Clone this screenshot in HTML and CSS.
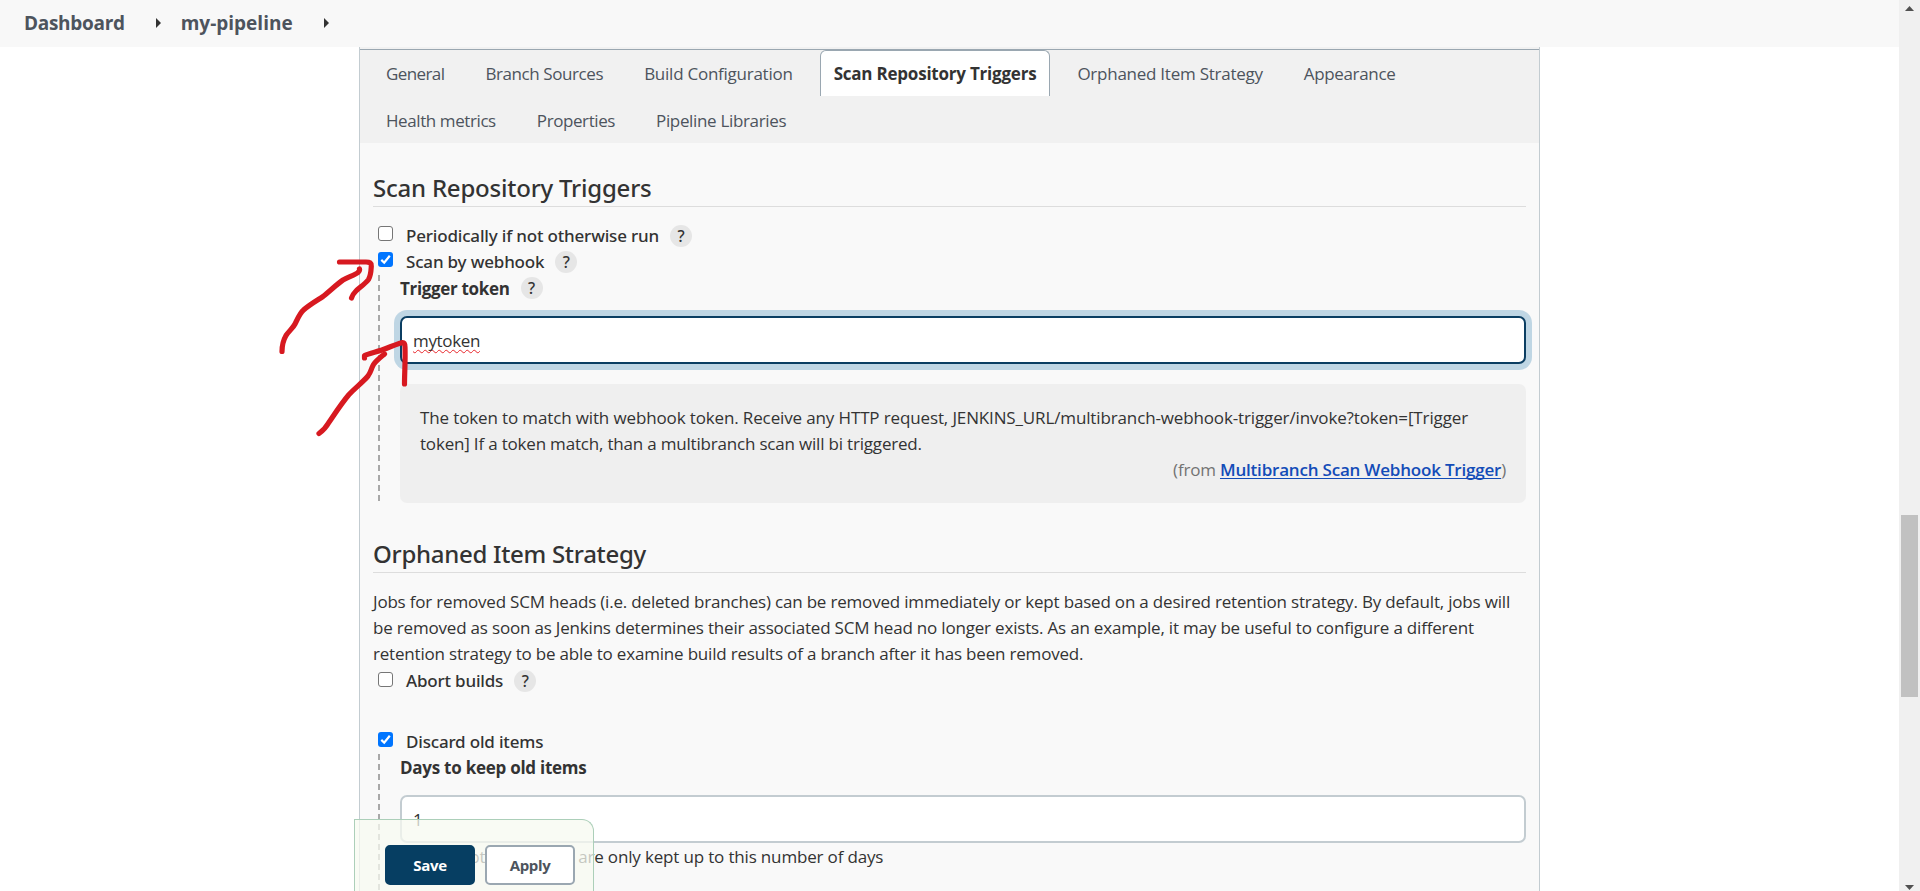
FILE: index.html
```html
<!DOCTYPE html>
<html lang="en">
<head>
<meta charset="utf-8">
<title>my-pipeline Config [Jenkins]</title>
<link rel="stylesheet" href="styles.css">
</head>
<body>
<div class="app">
  <div class="main">
    <nav class="breadcrumbs">
      <a class="crumb crumb-home">Dashboard</a>
      <svg class="crumb-arrow" width="5" height="10" viewBox="0 0 5 10"><path d="M0 0L5 5L0 10z" fill="#333"/></svg>
      <a class="crumb">my-pipeline</a>
      <svg class="crumb-arrow" width="5" height="10" viewBox="0 0 5 10"><path d="M0 0L5 5L0 10z" fill="#333"/></svg>
    </nav>

    <div class="panel">
      <div class="tabs">
        <div class="tab-row">
          <a class="tab tab-tight">General</a>
          <a class="tab tab-snug">Branch Sources</a>
          <a class="tab tab-loose">Build Configuration</a>
          <a class="tab tab-active">Scan Repository Triggers</a>
          <a class="tab tab-loose">Orphaned Item Strategy</a>
          <a class="tab">Appearance</a>
        </div>
        <div class="tab-row">
          <a class="tab tab-snug">Health metrics</a>
          <a class="tab tab-snug">Properties</a>
          <a class="tab">Pipeline Libraries</a>
        </div>
      </div>

      <form class="form">
        <h2 class="section-title">Scan Repository Triggers</h2>
        <div class="option option-first">
          <span class="checkbox"></span>
          <label class="option-label">Periodically if not otherwise run</label>
          <span class="help">?</span>
        </div>
        <div class="option">
          <span class="checkbox checked"><svg width="15" height="15" viewBox="0 0 15 15"><path d="M3.3 7.9L6.2 10.7L11.8 3.7" fill="none" stroke="#fff" stroke-width="2.2"/></svg></span>
          <label class="option-label">Scan by webhook</label>
          <span class="help">?</span>
        </div>
        <div class="nested">
          <div class="field-head">
            <label class="field-label field-label-token">Trigger token</label>
            <span class="help">?</span>
          </div>
          <div class="input input-focus"><span class="misspelled">mytoken</span></div>
          <div class="help-box">
            <p class="text line-token">The token to match with webhook token. Receive any HTTP request, JENKINS_URL/multibranch-webhook-trigger/invoke?token=[Trigger<br>
            <span class="text">token] If a token match, than a multibranch scan will bi triggered.</span></p>
            <p class="from">(from <a class="plugin-link">Multibranch Scan Webhook Trigger</a>)</p>
          </div>
        </div>

        <h2 class="section-title section-orphaned">Orphaned Item Strategy</h2>
        <p class="text intro">Jobs for removed SCM heads (i.e. deleted branches) can be removed immediately or kept based on a desired retention strategy. By default, jobs will<br>be removed as soon as Jenkins determines their associated SCM head no longer exists. As an example, it may be useful to configure a different<br>retention strategy to be able to examine build results of a branch after it has been removed.</p>
        <div class="option option-abort">
          <span class="checkbox"></span>
          <label class="option-label">Abort builds</label>
          <span class="help">?</span>
        </div>
        <div class="option option-discard">
          <span class="checkbox checked"><svg width="15" height="15" viewBox="0 0 15 15"><path d="M3.3 7.9L6.2 10.7L11.8 3.7" fill="none" stroke="#fff" stroke-width="2.2"/></svg></span>
          <label class="option-label">Discard old items</label>
        </div>
        <div class="nested nested-discard">
          <div class="field-head"><label class="field-label">Days to keep old items</label></div>
          <div class="input">1</div>
          <p class="text description">if not empty, old items are only kept up to this number of days</p>
        </div>
      </form>
    </div>
  </div>

  <div class="scrollbar">
    <svg class="scroll-up" width="9" height="5" viewBox="0 0 9 5"><path d="M4.5 0L9 5H0z" fill="#505050"/></svg>
    <div class="scroll-thumb"></div>
    <svg class="scroll-down" width="9" height="5" viewBox="0 0 9 5"><path d="M0 0H9L4.5 5z" fill="#505050"/></svg>
  </div>

  <div class="sticker">
    <button class="btn btn-primary">Save</button>
    <button class="btn">Apply</button>
  </div>

  <svg class="annotations" width="240" height="200" viewBox="260 240 240 200">
    <g fill="none" stroke="#d71920" stroke-width="5.2" stroke-linecap="round" stroke-linejoin="round">
      <path d="M282 351.500C282 345 284 339 286 335.500C289 331 293 328 295 324C298 318 300 313 303.500 310C309 305 316 301 323 296.500C330 291 337 284 343 280C348 277 355 275 358 272.500C359.500 271 359.800 270 359.500 269"/>
      <path d="M339.500 262H366C370 262 371.500 263 371.300 266C371 271 371 275 368.500 279.500C365 284 359 288 356 291C353 294 352 296 351.500 298"/>
      <path d="M319 433.500C323 430.500 326 427.500 328.500 423C334 415 341 404 349 394.500C355 388 363 382 368 376C371 372 371 369 373.500 364.500C377 360 381 357 384.500 354"/>
      <path d="M364.500 358L364.500 355.500C370 353 379 351.500 386 348.500C392 346 397 344 402.500 342.500C404 342.500 405 344 405 347C405.500 360 404.500 373 404.500 384"/>
    </g>
  </svg>
</div>
</body>
</html>
```
FILE: styles.css
```css
* { box-sizing: border-box; }
body {
  margin: 0;
  background: #fff;
  color: #333;
  font: 17px/26px "Open Sans", sans-serif;
  overflow: hidden;
}
h2, p { margin: 0; font-weight: 400; }

.app { position: relative; display: flex; height: 891px; overflow: hidden; }
.main { flex: 1; min-width: 0; display: flex; flex-direction: column; }

.breadcrumbs {
  display: flex;
  flex: none;
  align-items: center;
  height: 47px;
  padding: 0 0 2px 24px;
  background: #f8f8f8;
}
.crumb { color: #4d545d; font-size: 19px; font-weight: 700; }
.crumb-home { letter-spacing: -.3px; }
.crumb-arrow { margin: 0 20px 0 31px; }

.panel {
  flex: 1;
  width: 1181px;
  margin-left: 359px;
  border: solid #c3ccd1;
  border-width: 0 1px;
  background: #f9f9f9;
}
.tabs {
  height: 96px;
  padding-top: 3px;
  background: linear-gradient(#f1f1f1 2px, #9aa7b1 2px, #9aa7b1 3px, #f1f1f1 3px);
}
.tab-row { display: flex; gap: 13px; height: 47px; padding-left: 12px; }
.tab {
  height: 46px;
  padding: 0 13px;
  border: 1px solid transparent;
  border-bottom: 0;
  color: #4d545d;
  line-height: 45px;
  letter-spacing: -.34px;
  white-space: nowrap;
}
.tab-tight { letter-spacing: -.6px; }
.tab-snug { letter-spacing: -.41px; }
.tab-loose { letter-spacing: -.25px; }
.tab-active {
  border-color: #9aa7b1;
  border-radius: 6px 6px 0 0;
  background: #fff;
  color: #333;
  font-weight: 700;
  letter-spacing: -.22px;
}

.form { padding: 27px 13px 0; }
.section-title {
  height: 37px;
  border-bottom: 1px solid #ddd;
  font: 500 24px/36px "Noto Sans", sans-serif;
  letter-spacing: -.22px;
}
.section-orphaned { margin-top: 33px; letter-spacing: -.29px; }
.text { letter-spacing: -.19px; white-space: nowrap; }
.line-token { letter-spacing: -.134px; }
.intro { margin-top: 16px; }

.option { display: flex; height: 26px; padding-left: 5px; }
.option-first { margin-top: 15px; }
.option-label {
  margin-left: 13px;
  padding-top: 1px;
  font-family: "Noto Sans", sans-serif;
  font-weight: 500;
  letter-spacing: -.18px;
}
.checkbox {
  width: 15px;
  height: 15px;
  margin-top: 4px;
  border: 1px solid #767676;
  border-radius: 3px;
  background: #fff;
}
.checked { border: 0; background: #0075ff; }
.checkbox svg { display: block; }
.option-abort .checkbox { margin-top: 5px; }
.option-discard { margin-top: 35px; }
.help {
  width: 22px;
  height: 22px;
  margin: 3px 0 0 11px;
  border-radius: 50%;
  background: #e6e6e6;
  font: 500 16px/22px "Noto Sans", sans-serif;
  text-align: center;
}

.nested {
  height: 228px;
  margin: 1px 0 0 5px;
  padding-left: 22px;
  background: repeating-linear-gradient(#a8a8a8 0 6px, transparent 6px 10px) 0 0 / 2px 100% no-repeat;
}
.nested-discard { margin-top: 0; }
.field-head { display: flex; height: 26px; }
.field-head .help { margin-top: 2px; }
.field-label { padding-top: 1px; font-weight: 700; letter-spacing: -.26px; }
.field-label-token { letter-spacing: -.33px; }
.input {
  height: 48px;
  margin-top: 15px;
  padding-left: 11px;
  border: 2px solid #c3ccd1;
  border-radius: 7px;
  background: #fff;
  line-height: 45px;
}
.input-focus { border-color: #0b3e62; box-shadow: 0 0 0 6px #bfd6e4; }
.misspelled {
  letter-spacing: -.35px;
  text-decoration: underline wavy #e8262b 1px;
  text-decoration-skip-ink: none;
  text-underline-offset: 2px;
}
.help-box {
  height: 119px;
  margin-top: 20px;
  padding: 21px 20px 0 20px;
  border-radius: 7px;
  background: #efefef;
}
.from { color: #737373; text-align: right; letter-spacing: -.2px; }
.plugin-link {
  color: #134cb8;
  font-weight: 600;
  text-decoration: underline 1px;
  text-decoration-skip-ink: none;
  text-underline-offset: 2px;
}
.description { padding-top: 1px; letter-spacing: -.165px; }

.scrollbar {
  display: flex;
  flex-direction: column;
  align-items: center;
  flex: none;
  width: 21px;
  padding: 6px 1px 1px 0;
  background: #f0f0f0;
}
.scroll-thumb { width: 17px; height: 182px; margin: 504px 0 auto; background: #c1c1c1; }

.sticker {
  position: absolute;
  left: 354px;
  bottom: 0;
  display: flex;
  gap: 10px;
  width: 240px;
  height: 72px;
  padding: 25px 0 0 30px;
  border: 1px solid #accfb9;
  border-bottom: 0;
  border-radius: 0 12px 0 0;
  background: rgba(247, 250, 240, .75);
}
.btn {
  width: 90px;
  height: 40px;
  padding: 0;
  border: 2px solid #9aa7b1;
  border-radius: 5px;
  background: #fff;
  color: #4d545d;
  font: 700 15px/24px "Open Sans", sans-serif;
  letter-spacing: -.35px;
}
.btn-primary { border-color: #063e62; background: #063e62; color: #fff; }

.annotations { position: absolute; left: 260px; top: 240px; }
```
